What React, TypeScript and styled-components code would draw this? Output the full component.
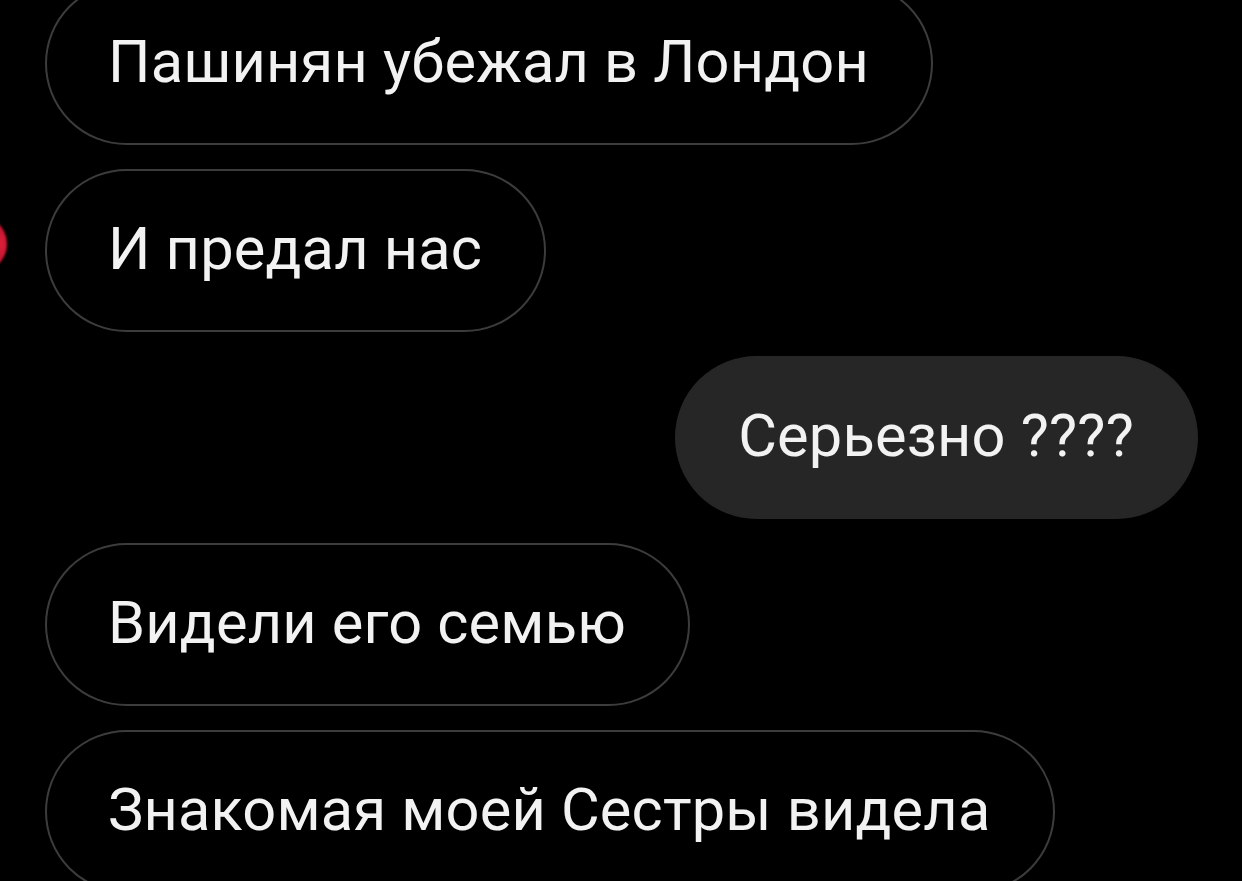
import styled, { createGlobalStyle } from "styled-components";

const GlobalStyle = createGlobalStyle`
  html, body {
    margin: 0;
    padding: 0;
    background: #000;
    overflow: hidden;
  }
  body {
    font-family: Roboto, "Liberation Sans", sans-serif;
  }
`;

const Thread = styled.div`
  width: 1242px;
  height: 881px;
  overflow: hidden;
  background: #000;
  display: flex;
  flex-direction: column;
  gap: 24px;
  padding: 0 44px 0 45px;
  box-sizing: border-box;
`;

const Row = styled.div<{ $mine?: boolean; $first?: boolean }>`
  position: relative;
  display: flex;
  justify-content: ${(p) => (p.$mine ? "flex-end" : "flex-start")};
  margin-top: ${(p) => (p.$first ? "-18px" : "0")};
`;

const Bubble = styled.div<{ $mine?: boolean }>`
  height: 163px;
  box-sizing: border-box;
  display: flex;
  align-items: center;
  padding: 0 62px 4px 61px;
  border-radius: 82px;
  border: 2px solid ${(p) => (p.$mine ? "#262626" : "#3c3c3c")};
  background: ${(p) => (p.$mine ? "#262626" : "#000")};
  color: #f2f2f2;
  font-size: 59.5px;
  letter-spacing: 0.2px;
  white-space: nowrap;
`;

const Avatar = styled.div`
  position: absolute;
  left: -96px;
  top: 46px;
  width: 58px;
  height: 58px;
  border-radius: 50%;
  background: radial-gradient(circle at 85% 50%, #e0203a 0%, #b0102a 45%, #3a0612 80%);
  filter: blur(1px);
`;

const messages = [
  { text: "Пашинян убежал в Лондон" },
  { text: "И предал нас", avatar: true },
  { text: "Серьезно ????", mine: true },
  { text: "Видели его семью" },
  { text: "Знакомая моей Сестры видела" },
];

export default function App() {
  return (
    <>
      <GlobalStyle />
      <Thread>
        {messages.map((m, i) => (
          <Row key={i} $mine={m.mine} $first={i === 0}>
            {m.avatar && <Avatar />}
            <Bubble $mine={m.mine}>{m.text}</Bubble>
          </Row>
        ))}
      </Thread>
    </>
  );
}
